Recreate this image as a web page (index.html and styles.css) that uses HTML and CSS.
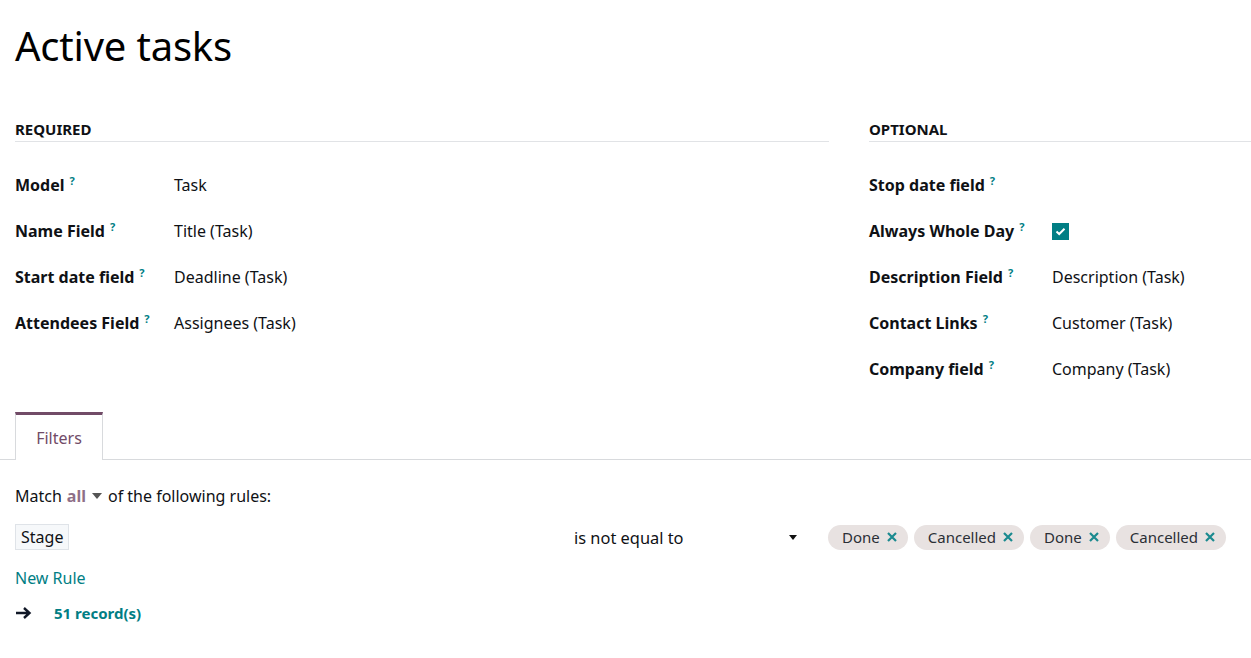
FILE: index.html
```html
<!DOCTYPE html>
<html lang="en">
<head>
    <meta charset="UTF-8">
    <meta name="viewport" content="width=device-width, initial-scale=1.0">
    <title>Active tasks</title>
    <link rel="stylesheet" href="styles.css">
</head>
<body>
    <div class="sheet">
        <h1 class="title">Active tasks</h1>

        <div class="groups">
            <div class="group">
                <div class="group-title">Required</div>
                <div class="fields">
                    <div class="field"><span class="label">Model<sup>?</sup></span><span class="value">Task</span></div>
                    <div class="field"><span class="label">Name Field<sup>?</sup></span><span class="value">Title (Task)</span></div>
                    <div class="field"><span class="label">Start date field<sup>?</sup></span><span class="value">Deadline (Task)</span></div>
                    <div class="field"><span class="label">Attendees Field<sup>?</sup></span><span class="value">Assignees (Task)</span></div>
                </div>
            </div>
            <div class="group group-right">
                <div class="group-title">Optional</div>
                <div class="fields">
                    <div class="field"><span class="label">Stop date field<sup>?</sup></span><span class="value"></span></div>
                    <div class="field"><span class="label">Always Whole Day<sup>?</sup></span>
                        <span class="value">
                            <span class="checkbox">
                                <svg width="11" height="9" viewBox="0 0 11 9"><path d="M1.5 4.5 L4.2 7 L9.5 1.8" fill="none" stroke="#fff" stroke-width="2"/></svg>
                            </span>
                        </span>
                    </div>
                    <div class="field"><span class="label">Description Field<sup>?</sup></span><span class="value">Description (Task)</span></div>
                    <div class="field"><span class="label">Contact Links<sup>?</sup></span><span class="value">Customer (Task)</span></div>
                    <div class="field"><span class="label">Company field<sup>?</sup></span><span class="value">Company (Task)</span></div>
                </div>
            </div>
        </div>

        <div class="tabs">
            <div class="tab active">Filters</div>
        </div>

        <div class="domain">
            <div class="match">Match <span class="match-all">all</span><span class="caret"></span> of the following rules:</div>
            <div class="rule">
                <div class="rule-path"><span class="path-box">Stage</span></div>
                <div class="rule-operator">is not equal to<span class="caret dark"></span></div>
                <div class="rule-values">
                    <span class="tag">Done<svg class="tag-x" width="10" height="10" viewBox="0 0 10 10"><path d="M1 1 L9 9 M9 1 L1 9"/></svg></span>
                    <span class="tag">Cancelled<svg class="tag-x" width="10" height="10" viewBox="0 0 10 10"><path d="M1 1 L9 9 M9 1 L1 9"/></svg></span>
                    <span class="tag">Done<svg class="tag-x" width="10" height="10" viewBox="0 0 10 10"><path d="M1 1 L9 9 M9 1 L1 9"/></svg></span>
                    <span class="tag">Cancelled<svg class="tag-x" width="10" height="10" viewBox="0 0 10 10"><path d="M1 1 L9 9 M9 1 L1 9"/></svg></span>
                </div>
            </div>
            <a class="new-rule" href="#">New Rule</a>
            <div class="records">
                <svg width="17" height="14" viewBox="0 0 17 14"><path d="M1 7 H14 M9 2 L14.5 7 L9 12" fill="none" stroke="#111827" stroke-width="2.4"/></svg>
                <span class="records-count">51 record(s)</span>
            </div>
        </div>
    </div>
</body>
</html>
```

FILE: styles.css
```css
body {
    margin: 0;
    background-color: #fff;
    color: #0f1115;
    font-family: "Noto Sans", "Open Sans", sans-serif;
    font-size: 16px;
}
.sheet {
    width: 1251px;
}
.title {
    margin: 0;
    padding: 18px 15px 0;
    font-size: 40px;
    font-weight: 400;
    line-height: 56px;
    letter-spacing: -0.2px;
    color: #000;
}
.groups {
    display: grid;
    grid-template-columns: 814px 1fr;
    column-gap: 40px;
    padding-left: 15px;
    margin-top: 45px;
}
.group-title {
    font-size: 15px;
    font-weight: 700;
    text-transform: uppercase;
    padding-bottom: 2px;
    border-bottom: 1px solid #e1e3e6;
}
.fields {
    padding-top: 20px;
}
.field {
    display: flex;
    align-items: center;
    height: 46px;
}
.label {
    width: 159px;
    flex: none;
    font-weight: 700;
}
.group-right .label {
    width: 183px;
}
.label sup {
    color: #017e84;
    font-size: 11px;
    margin-left: 5px;
}
.value {
    display: flex;
    align-items: center;
}
.checkbox {
    width: 17px;
    height: 17px;
    background-color: #017e84;
    display: flex;
    align-items: center;
    justify-content: center;
}
.tabs {
    display: flex;
    margin-top: 20px;
    padding-left: 15px;
    border-bottom: 1px solid #d8dadd;
}
.tab {
    width: 86px;
    height: 45px;
    display: flex;
    align-items: center;
    justify-content: center;
    color: #714b67;
    border: 1px solid #d8dadd;
    border-top: 3px solid #714b67;
    border-bottom: none;
    margin-bottom: -1px;
    background: #fff;
}
.domain {
    padding: 22px 15px 0;
}
.match {
    height: 28px;
    display: flex;
    align-items: center;
}
.match-all {
    color: #8f6f87;
    font-weight: 700;
    margin-left: 5px;
}
.caret {
    display: inline-block;
    width: 0;
    height: 0;
    border-left: 5px solid transparent;
    border-right: 5px solid transparent;
    border-top: 6px solid #555;
    margin: 0 6px;
}
.caret.dark {
    border-left-width: 4px;
    border-right-width: 4px;
    border-top: 5px solid #111;
    margin-left: auto;
}
.rule {
    display: flex;
    align-items: center;
    margin-top: 14px;
    height: 26px;
}
.rule-path {
    width: 559px;
}
.path-box {
    display: inline-block;
    padding: 1px 5px;
    border: 1px solid #dfe3e8;
    background-color: #f6f8fa;
    line-height: 22px;
}
.rule-operator {
    display: flex;
    align-items: center;
    width: 229px;
    font-size: 16.4px;
}
.rule-values {
    display: flex;
    gap: 6px;
    margin-left: 25px;
}
.tag {
    display: inline-flex;
    align-items: center;
    height: 25px;
    padding: 0 11px 0 14px;
    border-radius: 13px;
    background-color: #e8e2e1;
    font-size: 15px;
    color: #2b2f36;
}
.tag-x {
    margin-left: 7px;
    fill: none;
    stroke: #1a8a8f;
    stroke-width: 2.2;
}
.new-rule {
    display: block;
    margin-top: 15px;
    color: #017e84;
    text-decoration: none;
    line-height: 26px;
}
.records {
    display: flex;
    align-items: center;
    margin-top: 12px;
    gap: 22px;
}
.records-count {
    color: #017e84;
    font-weight: 700;
    font-size: 15px;
}
```
